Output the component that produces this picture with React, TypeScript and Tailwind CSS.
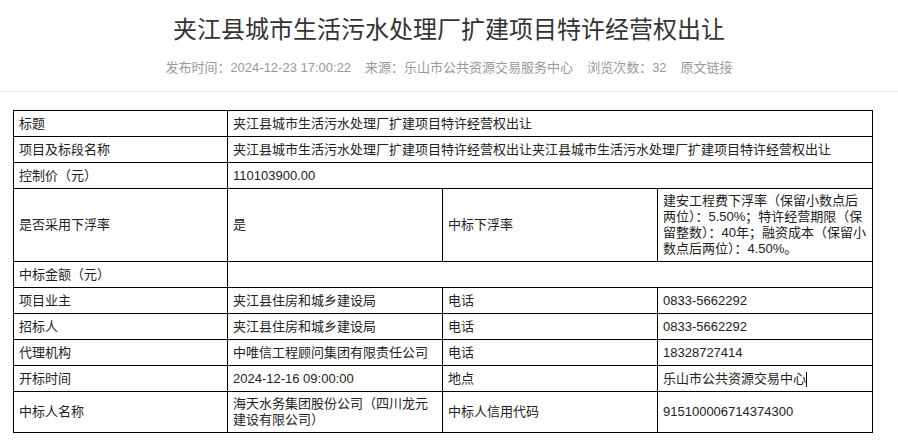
import React from "react";

const td = "border border-black px-[5px] align-middle";
export default function App() {
  const f = { fontFamily: '"Liberation Sans","Noto Sans CJK SC",sans-serif' };
  return (
    <div className="w-[898px] h-[445px] bg-white overflow-hidden text-[#333]" style={f}>
      <h1 className="text-center text-[24px] leading-[32px] pt-[14px] text-[#333]">夹江县城市生活污水处理厂扩建项目特许经营权出让</h1>
      <div className="text-center text-[13px] text-[#999] mt-[12px] leading-[20px]">
        <span>发布时间：2024-12-23 17:00:22</span>
        <span className="ml-[14px]">来源：乐山市公共资源交易服务中心</span>
        <span className="ml-[14px]">浏览次数：32</span>
        <span className="ml-[14px]">原文链接</span>
      </div>
      <div className="border-t border-[#e5e5e5] mt-[13px]" />
      <table className="ml-[13px] mt-[18px] border-collapse text-[13px] text-[#222] w-[859px] table-fixed">
        <colgroup>
          <col className="w-[214px]" /><col className="w-[215px]" /><col className="w-[215px]" /><col className="w-[215px]" />
        </colgroup>
        <tbody>
          <tr className="h-[26px]"><td className={td}>标题</td><td className={td} colSpan={3}>夹江县城市生活污水处理厂扩建项目特许经营权出让</td></tr>
          <tr className="h-[26px]"><td className={td}>项目及标段名称</td><td className={td} colSpan={3}>夹江县城市生活污水处理厂扩建项目特许经营权出让夹江县城市生活污水处理厂扩建项目特许经营权出让</td></tr>
          <tr className="h-[26px]"><td className={td}>控制价（元）</td><td className={td} colSpan={3}>110103900.00</td></tr>
          <tr className="h-[73px]"><td className={td}>是否采用下浮率</td><td className={td}>是</td><td className={td}>中标下浮率</td><td className={`${td} leading-[16px]`}>建安工程费下浮率（保留小数点后两位）：5.50%；特许经营期限（保留整数）：40年；融资成本（保留小数点后两位）：4.50%。</td></tr>
          <tr className="h-[26px]"><td className={td}>中标金额（元）</td><td className={td} colSpan={3}></td></tr>
          <tr className="h-[26px]"><td className={td}>项目业主</td><td className={td}>夹江县住房和城乡建设局</td><td className={td}>电话</td><td className={td}>0833-5662292</td></tr>
          <tr className="h-[26px]"><td className={td}>招标人</td><td className={td}>夹江县住房和城乡建设局</td><td className={td}>电话</td><td className={td}>0833-5662292</td></tr>
          <tr className="h-[26px]"><td className={td}>代理机构</td><td className={td}>中唯信工程顾问集团有限责任公司</td><td className={td}>电话</td><td className={td}>18328727414</td></tr>
          <tr className="h-[26px]"><td className={td}>开标时间</td><td className={td}>2024-12-16 09:00:00</td><td className={td}>地点</td><td className={td}>乐山市公共资源交易中心<span className="inline-block w-px h-[15px] bg-black align-middle" /></td></tr>
          <tr className="h-[41px]"><td className={td}>中标人名称</td><td className={`${td} leading-[16px]`}>海天水务集团股份公司（四川龙元建设有限公司）</td><td className={td}>中标人信用代码</td><td className={td}>915100006714374300</td></tr>
        </tbody>
      </table>
    </div>
  );
}
